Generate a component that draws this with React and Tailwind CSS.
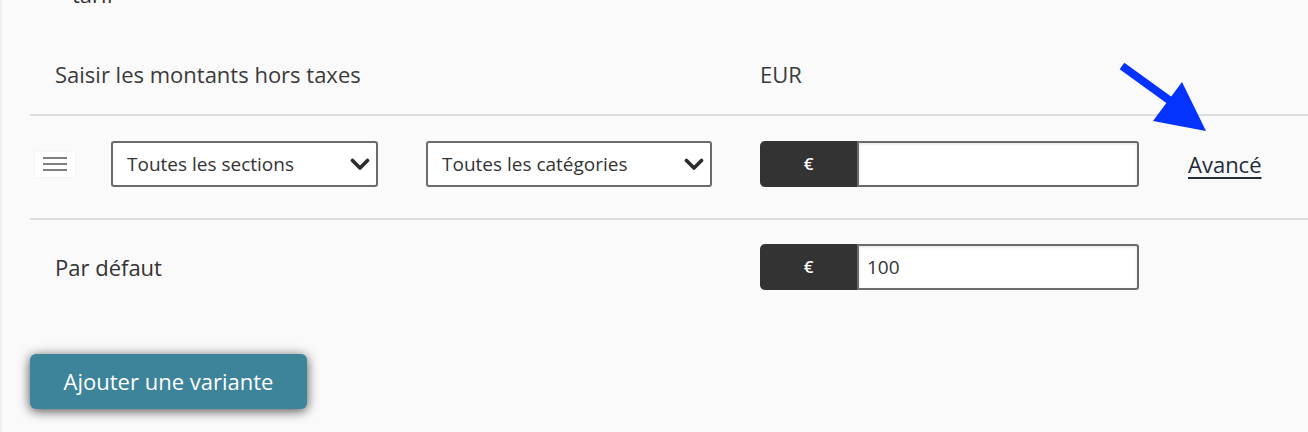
import React from 'react';

function Chevron() {
    return (
        <svg width="20" height="13" viewBox="0 0 20 13" className="shrink-0">
            <polyline points="2.5,2.5 10,10 17.5,2.5" fill="none" stroke="#2b2b2b" strokeWidth="3.6" strokeLinecap="round" strokeLinejoin="round" />
        </svg>
    );
}

function Select({ label, width }) {
    return (
        <div className={`${width} h-[46px] bg-white border-2 border-[#6b6b6b] rounded-[3px] flex items-center justify-between pl-[14px] pr-[6px]`}>
            <span className="text-[19px] text-[#333]">{label}</span>
            <Chevron />
        </div>
    );
}

function Amount({ value }) {
    return (
        <div className="w-[379px] h-[46px] flex">
            <div className="w-[97px] bg-[#333333] rounded-l-[5px] flex items-center justify-center text-white text-[17px] font-semibold">€</div>
            <div className="flex-1 bg-white border-2 border-[#6b6b6b] rounded-r-[3px] shadow-[inset_0_1px_3px_rgba(0,0,0,0.12)] flex items-center pl-[8px] text-[19px] text-[#333]">
                {value}
            </div>
        </div>
    );
}

export default function App() {
    return (
        <div className="relative h-[432px] bg-[#fafafa] border-l-2 border-[#f0f0f0] overflow-hidden" style={{ fontFamily: '"Open Sans", "Noto Sans", sans-serif' }}>
            <div className="-mt-[19px] pl-[70px] text-[22px] leading-[26px] text-[#333]">tarif</div>

            <div className="ml-[28px]">
                <div className="mt-[54px] pb-[27px] border-b-2 border-[#dddddd] flex text-[22px] leading-[26px] text-[#3a3a3a]">
                    <span className="ml-[25px] w-[705px]">Saisir les montants hors taxes</span>
                    <span>EUR</span>
                </div>

                <div className="pt-[25px] pb-[31px] border-b-2 border-[#dddddd] flex items-center pl-[5px]">
                    <div className="w-[40px] h-[25px] bg-white shadow-[0_0_2px_rgba(0,0,0,0.06)] flex flex-col items-center justify-center gap-[4px]">
                        <span className="block w-[24px] h-[2px] bg-[#7f7f7f]"></span>
                        <span className="block w-[24px] h-[2px] bg-[#7f7f7f]"></span>
                        <span className="block w-[24px] h-[2px] bg-[#7f7f7f]"></span>
                    </div>
                    <div className="ml-[36px]"><Select label="Toutes les sections" width="w-[267px]" /></div>
                    <div className="ml-[48px]"><Select label="Toutes les catégories" width="w-[286px]" /></div>
                    <div className="ml-[48px]"><Amount value="" /></div>
                    <a href="#" className="ml-[49px] text-[22px] text-[#222b38] underline underline-offset-[4px]">Avancé</a>
                </div>

                <div className="pt-[24px] flex items-center">
                    <span className="ml-[25px] w-[705px] text-[22px] text-[#333]">Par défaut</span>
                    <Amount value="100" />
                </div>

                <button className="mt-[64px] w-[277px] h-[55px] bg-[#3d8399] rounded-[6px] text-white text-[22px] shadow-[0_2px_12px_rgba(0,0,0,0.7)]">
                    Ajouter une variante
                </button>
            </div>

            <svg className="absolute left-[1100px] top-[50px]" width="120" height="100" viewBox="0 0 120 100">
                <line x1="20" y1="16" x2="74" y2="55" stroke="#0433ff" strokeWidth="8" />
                <polygon points="80,32 51,71 104,81" fill="#0433ff" />
            </svg>
        </div>
    );
}
